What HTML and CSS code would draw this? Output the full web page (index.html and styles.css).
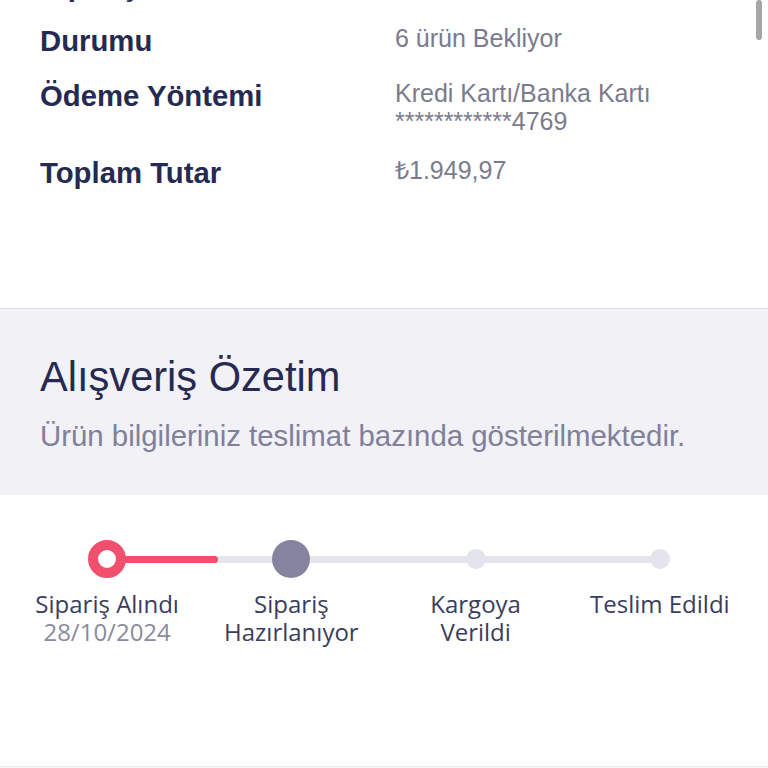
FILE: index.html
```html
<!DOCTYPE html>
<html lang="tr">
<head>
  <meta charset="UTF-8">
  <meta name="viewport" content="width=device-width, initial-scale=1.0">
  <title>Sipariş Detayı</title>
  <link rel="stylesheet" href="styles.css">
</head>
<body>
  <div class="page">
    <div class="info">
      <div class="row">
        <div class="label">Sipariş Tarihi</div>
        <div class="value">28/10/2024</div>
      </div>
      <div class="row">
        <div class="label">Durumu</div>
        <div class="value">6 ürün Bekliyor</div>
      </div>
      <div class="row">
        <div class="label">Ödeme Yöntemi</div>
        <div class="value">Kredi Kartı/Banka Kartı<br>************4769</div>
      </div>
      <div class="row">
        <div class="label">Toplam Tutar</div>
        <div class="value">₺1.949,97</div>
      </div>
    </div>

    <div class="summary">
      <h2>Alışveriş Özetim</h2>
      <p>Ürün bilgileriniz teslimat bazında gösterilmektedir.</p>
    </div>

    <div class="tracker">
      <div class="steps">
        <div class="bar"><div class="fill"></div></div>
        <div class="dot done"></div>
        <div class="dot current"></div>
        <div class="dot"></div>
        <div class="dot"></div>

        <div class="step">Sipariş Alındı<span class="date">28/10/2024</span></div>
        <div class="step">Sipariş<br>Hazırlanıyor</div>
        <div class="step">Kargoya<br>Verildi</div>
        <div class="step">Teslim Edildi</div>
      </div>
    </div>
  </div>
  <div class="scrollbar"></div>
</body>
</html>
```

FILE: styles.css
```css
body {
  margin: 0;
  background-color: #f4f4f7;
  font-family: "Liberation Sans", Arial, sans-serif;
  overflow: hidden;
}
.page {
  margin-top: -31px;
}
.info {
  background-color: #fff;
  padding: 0 40px 97px;
  border-bottom: 1px solid #dcdce3;
}
.row {
  display: flex;
  align-items: flex-start;
  margin-bottom: 21px;
}
.label {
  width: 355px;
  flex-shrink: 0;
  font-size: 29.3px;
  line-height: 34px;
  font-weight: 700;
  color: #262a50;
}
.value {
  font-size: 25px;
  line-height: 28px;
  color: #7b7b8d;
}
.summary {
  background-color: #f1f1f6;
  padding: 44px 40px 42px;
}
.summary h2 {
  margin: 0 0 18px;
  font-size: 41.6px;
  line-height: 48px;
  font-weight: 400;
  color: #262a50;
}
.summary p {
  margin: 0;
  font-size: 29.4px;
  line-height: 34px;
  color: #80809a;
}
.tracker {
  background-color: #fff;
  height: 271px;
  border-bottom: 1px solid #ececf1;
}
.steps {
  display: grid;
  grid-template-columns: repeat(4, 1fr);
  grid-template-rows: 38px auto;
  row-gap: 12px;
  margin: 0 16px 0 15px;
  padding-top: 45px;
}
.bar {
  grid-row: 1;
  grid-column: 1 / -1;
  align-self: center;
  margin: 0 12.5%;
  height: 7px;
  border-radius: 4px;
  background-color: #e4e4ec;
}
.fill {
  width: 20%;
  height: 100%;
  border-radius: 4px;
  background-color: #f0506e;
}
.dot {
  grid-row: 1;
  align-self: center;
  justify-self: center;
  width: 20px;
  height: 20px;
  border-radius: 50%;
  background-color: #e4e4ec;
}
.dot:nth-of-type(2) { grid-column: 1; }
.dot:nth-of-type(3) { grid-column: 2; }
.dot:nth-of-type(4) { grid-column: 3; }
.dot:nth-of-type(5) { grid-column: 4; }
.dot.done {
  box-sizing: border-box;
  width: 38px;
  height: 38px;
  border: 10px solid #f0506e;
  background-color: #fff;
}
.dot.current {
  width: 38px;
  height: 38px;
  background-color: #84849e;
}
.step {
  grid-row: 2;
  text-align: center;
  font-family: "Open Sans", sans-serif;
  font-size: 24px;
  line-height: 28px;
  color: #3a3d5e;
}
.step .date {
  display: block;
  color: #8b8b9d;
}
.scrollbar {
  position: absolute;
  top: 0;
  right: 6px;
  width: 6px;
  height: 40px;
  border-radius: 3px;
  background-color: #a6a6a6;
}
```
